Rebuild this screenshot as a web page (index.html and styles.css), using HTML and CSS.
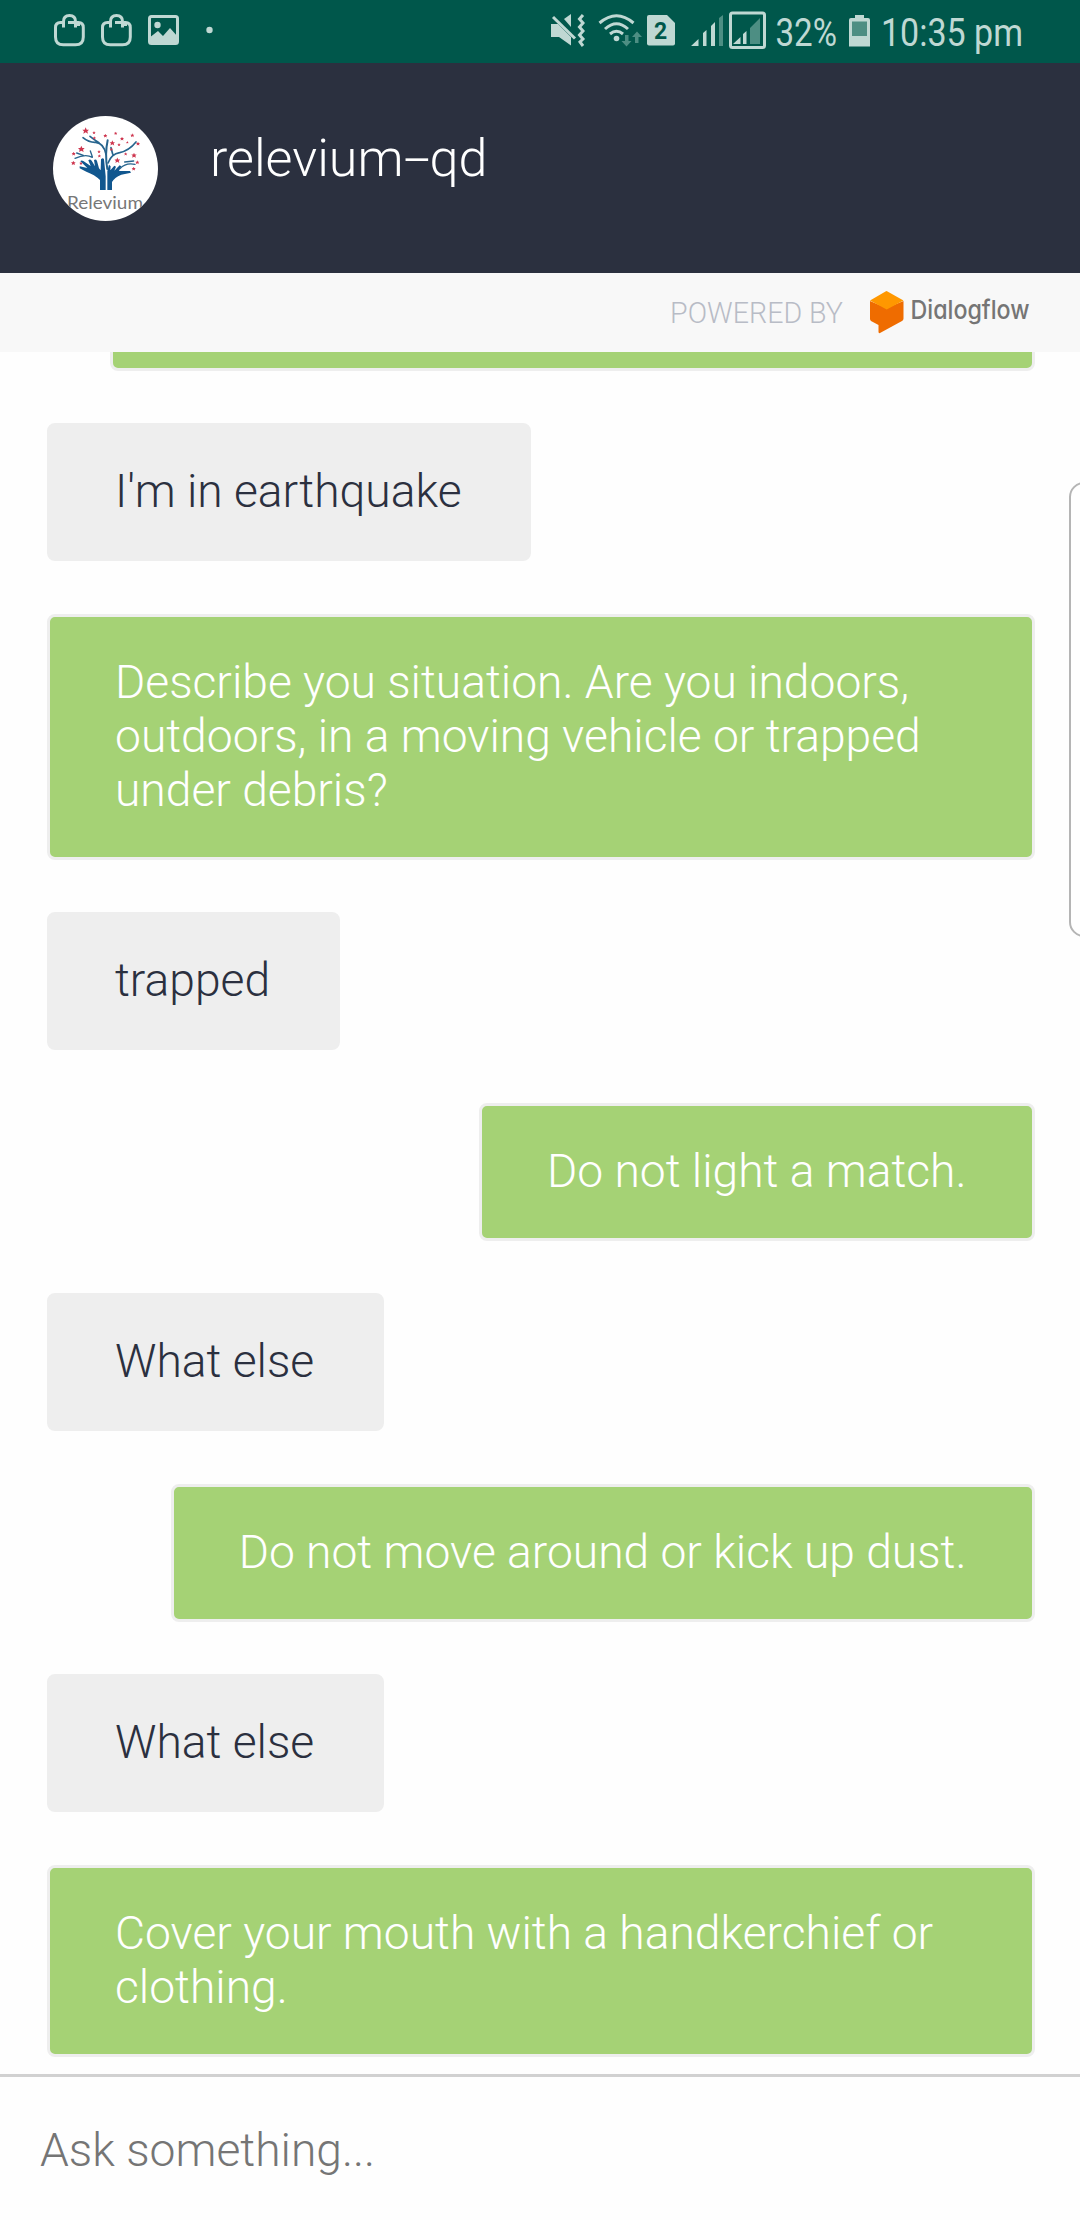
FILE: index.html
```html
<!DOCTYPE html>
<html lang="en">
<head>
<meta charset="utf-8">
<title>relevium-qd</title>
<link rel="stylesheet" href="styles.css">
</head>
<body>
<div class="app">
  <div class="status">
    <svg class="status-icons" width="1080" height="63" viewBox="0 0 1080 63">
      <g fill="none" stroke="#bfd8d3" stroke-width="3">
        <g id="bag">
          <path d="M63 22.500H60.500Q55.500 22.500 55.500 27.500V37Q55.500 44.800 63.300 44.800H75.500Q83.300 44.800 83.300 37V27.500Q83.300 22.500 78.500 22.500V26"/>
          <path d="M63.500 27.500V21.500Q63.500 15.500 69.500 15.500T75.500 21.500V27.500M68 22.500H75.500" />
        </g>
        <use href="#bag" x="47"/>
        <rect x="149.500" y="16.500" width="28" height="27" rx="2"/>
      </g>
      <g fill="#bfd8d3">
        <path d="M149 38L158 31L163 36L170 28L178 37V43H149Z"/>
        <circle cx="157.500" cy="25" r="3.200"/>
        <circle cx="209.500" cy="30" r="3.200"/>
        <path d="M551 24H558L571 37V45.500L559 37H551Z"/>
        <path d="M564 19L571 14V27Z"/>
        <circle cx="616.500" cy="38.500" r="2.800"/>
        <path d="M649 15H667L675 23V43.500Q675 45.500 673 45.500H649Q647 45.500 647 43.500V17Q647 15 649 15Z"/>
        <path d="M691 46L698.500 39V46ZM703 46V33L706.500 30V46ZM711 46V26L715 22V46Z"/>
        <path d="M733 44L740.500 37V44ZM743 44V34L746.500 31V44Z"/>
        <path d="M855 15H864V18H868Q870 18 870 20V46.500H849V20Q849 18 851 18H855Z"/>
      </g>
      <g fill="#4d8e83">
        <path d="M719 46V18L723 15V46ZM750 44V28L760 18V44ZM852 21.500H867V36H852Z"/>
        <path d="M625 35h3.500v6h3l-5 5.500-5-5.500h3.500ZM635 43v-6h-3l5-5.500 5 5.500h-3.500v6Z"/>
      </g>
      <g fill="none" stroke="#bfd8d3" stroke-width="3">
        <path d="M553 17L575 38.500"/>
        <path d="M583 15L579.500 19L583 23L579.500 27L583 31L579.500 35L583 39L580 42L583 46"/>
        <path d="M599.500 23Q616.500 8.500 633.500 23M605 29Q616.500 18.500 628 29M610 34Q616.500 28.500 623 34"/>
        <rect x="730.500" y="13" width="34" height="34.500" rx="2"/>
      </g>
      <text x="654" y="39" class="sim">2</text>
      <text x="775.500" y="45.500" class="clock" textLength="61.500" lengthAdjust="spacingAndGlyphs">32%</text>
      <text x="881" y="45.500" class="clock" textLength="142" lengthAdjust="spacingAndGlyphs">10:35 pm</text>
    </svg>
  </div>
  <header class="header">
    <svg class="avatar" width="105" height="105" viewBox="39 48 315 315">
      <defs><clipPath id="round"><circle cx="196.500" cy="205.500" r="157.500"/></clipPath></defs>
      <g clip-path="url(#round)">
        <rect x="39" y="48" width="315" height="315" fill="#fff"/>
        <g fill="#11578f">
          <path d="M180 270V240Q164 224 139 215L119 205V199L142 204L121 184Q124 179 130 183L152 198L145 181Q150 175 155 182L165 199L162 180Q168 176 171 183L177 205L182 211L183 178Q189 171 192 178L197 229V270Z"/>
          <path d="M202 270V214L207 194L212 199L211 211L223 197L228 200L223 212L239 196L244 199L237 213L270 213L273 218L244 224Q223 233 216 246V270Z"/>
        </g>
        <g fill="none" stroke="#27658e" stroke-linecap="round">
          <path d="M202 207Q194 163 203 121" stroke-width="6"/>
          <path d="M198 163Q191 129 167 127Q147 128 129 113M177 128Q162 119 150 109" stroke-width="5"/>
          <path d="M204 189Q214 162 239 158Q267 152 288 126M218 162L213 143" stroke-width="5"/>
          <path d="M157 172Q137 160 105 175M157 170L151 153M130 166L110 159M240 206Q257 187 285 193M254 186L281 183" stroke-width="4"/>
        </g>
        <defs><path id="star" d="M0-10L3-3L10-3L5 2L7 9L0 5L-7 9L-5 2L-10-3L-3-3Z"/></defs>
        <g fill="#ce354e">
          <use href="#star" x="137" y="92"/><use href="#star" x="124" y="147"/>
          <use href="#star" transform="translate(217 129) scale(.8)"/><use href="#star" transform="translate(232 181) scale(.85)"/>
          <use href="#star" transform="translate(277 106) scale(.6)"/><use href="#star" transform="translate(282 166) scale(.8)"/>
          <use href="#star" transform="translate(101 161) scale(.6)"/><use href="#star" transform="translate(100 189) scale(.7)"/>
          <use href="#star" transform="translate(292 187) scale(.6)"/><use href="#star" transform="translate(281 206) scale(.6)"/>
          <use href="#star" transform="translate(294 131) scale(.6)"/><use href="#star" transform="translate(196 107) scale(.6)"/>
          <use href="#star" transform="translate(177 155) scale(.5)"/><use href="#star" transform="translate(178 168) scale(.5)"/>
          <use href="#star" transform="translate(162 98) scale(.5)"/><use href="#star" transform="translate(163 114) scale(.5)"/>
          <use href="#star" transform="translate(227 100) scale(.5)"/><use href="#star" transform="translate(246 116) scale(.6)"/>
          <use href="#star" transform="translate(237 134) scale(.5)"/><use href="#star" transform="translate(262 127) scale(.4)"/>
          <use href="#star" transform="translate(214 148) scale(.5)"/><use href="#star" transform="translate(257 162) scale(.5)"/>
          <use href="#star" transform="translate(123 190) scale(.5)"/>
        </g>
        <text x="81" y="328" class="logo-name" textLength="228" lengthAdjust="spacingAndGlyphs">Relevium</text>
      </g>
    </svg>
    <h1 class="title">relevium<span class="dash">-</span>qd</h1>
  </header>
  <div class="powered">
    <span class="powered-label">POWERED BY</span>
    <svg class="dialogflow" width="164" height="50" viewBox="868 288 164 50">
      <path fill="#ef6c00" d="M870 301L886.500 308L903.500 301V318.500Q903.500 320 902 321L880 333Q878.500 333.500 878.500 332V325L871 321Q870 320 870 319Z"/>
      <path fill="#ff9800" d="M885.500 291.500Q886.500 290.700 887.500 291.500L903.500 300.500L886.700 309.500L870 300.500Z"/>
      <text x="910.500" y="319.300" class="brand" textLength="119" lengthAdjust="spacingAndGlyphs">Dialogflow</text>
    </svg>
  </div>
  <main class="chat">
    <div class="msg bot earlier"></div>
    <div class="msg user">I'm in earthquake</div>
    <div class="msg bot">Describe you situation. Are you indoors, outdoors, in a moving vehicle or trapped under debris?</div>
    <div class="msg user">trapped</div>
    <div class="msg bot">Do not light a match.</div>
    <div class="msg user">What else</div>
    <div class="msg bot">Do not move around or kick up dust.</div>
    <div class="msg user">What else</div>
    <div class="msg bot">Cover your mouth with a handkerchief or clothing.</div>
  </main>
  <footer class="ask">Ask something...</footer>
  <div class="edge-handle"></div>
</div>
</body>
</html>
```
FILE: styles.css
```css
* { box-sizing: border-box; }
body { margin: 0; background: #fefefe; font-family: Roboto, "Liberation Sans", sans-serif; font-weight: 300; }
.app { position: relative; width: 1080px; height: 2220px; display: flex; flex-direction: column; overflow: hidden; }
.status { height: 63px; flex: none; background: #00574b; }
.status-icons { display: block; }
.clock { font-size: 39px; font-weight: 400; fill: #bfd8d3; }
.sim { font-size: 23px; font-weight: 700; fill: #00574b; }
.header { height: 210px; flex: none; background: #2b303f; display: flex; align-items: flex-start; padding: 53px 53px 0; gap: 52px; }
.avatar { display: block; flex: none; }
.logo-name { font-family: Lato, sans-serif; font-weight: 400; font-size: 51px; fill: #777; }
.title { margin: 12px 0 0; font-size: 52px; line-height: 62px; font-weight: 300; color: #fff; white-space: nowrap; }
.dash { display: inline-block; width: 26px; text-align: center; transform: scaleX(1.85); }
.powered { height: 79px; flex: none; background: #f8f8f8; display: flex; align-items: center; justify-content: flex-end; padding-right: 48px; gap: 25px; }
.powered-label { font-size: 28.6px; color: #b8bcc6; }
.dialogflow { display: block; overflow: visible; }
.brand { font-family: Inter, sans-serif; font-feature-settings: "cv11"; font-weight: 450; font-size: 26px; fill: #757575; }
.chat { flex: 1; min-height: 0; overflow: hidden; display: flex; flex-direction: column; justify-content: flex-end; align-items: flex-start; gap: 52.5px; padding: 0 45px 17px 47px; }
.msg { flex: none; border: 3px solid #eee; border-radius: 8px; padding: 38px 65.5px 40px 65px; font-size: 46.2px; line-height: 54px; }
.user { margin: -1px 0 1px; padding-right: 66.5px; background: #eee; color: #2b303f; }
.bot { align-self: flex-end; background: #a5d275; color: #fff; }
.earlier { width: 925px; height: 138px; }
.ask { height: 146px; flex: none; border-top: 3px solid #d1d1d1; padding: 46px 40px; font-size: 46.2px; line-height: 54px; color: #757575; }
.edge-handle { position: absolute; left: 1069px; top: 482px; width: 30px; height: 455px; border: 2px solid #b5b5b5; border-radius: 16px; background: #fff; }
```
